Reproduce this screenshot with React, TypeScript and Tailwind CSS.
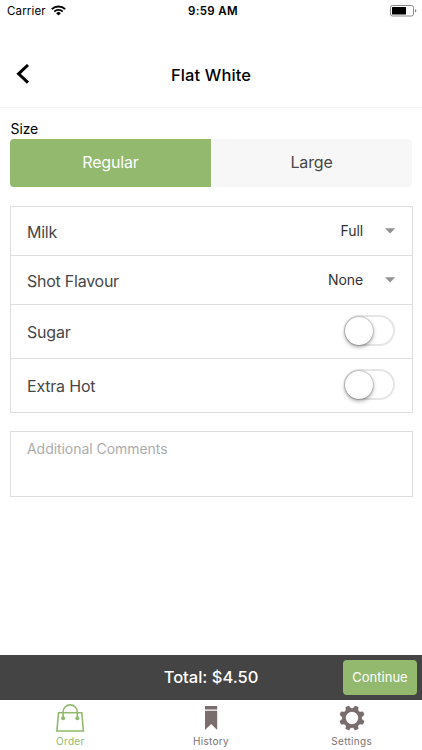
import React from "react";

const GREEN = "#92b96e";

function StatusBar() {
  return (
    <div className="flex h-[22px] items-center pt-px text-[11.5px] text-black">
      <div className="flex flex-1 items-center gap-[5px] pl-[7px]">
        <span className="tracking-[0.15px]">Carrier</span>
        <svg className="-mt-[2px]" width="15" height="11" viewBox="0 0 15 11" fill="none" stroke="#000">
          <path d="M0.8 4.2a9.5 9.5 0 0 1 13.4 0" strokeWidth="1.9" />
          <path d="M3.3 6.7a5.9 5.9 0 0 1 8.4 0" strokeWidth="1.8" />
          <path d="M7.5 10.6 5.1 8.3a3.4 3.4 0 0 1 4.8 0z" fill="#000" stroke="none" />
        </svg>
      </div>
      <span className="pl-[2px] font-semibold tracking-[0.35px]">9:59 AM</span>
      <div className="flex flex-1 justify-end pr-[5px]">
        <svg className="-mt-px" width="27" height="12" viewBox="0 0 27 12">
          <rect x="0.5" y="0.5" width="23" height="10.5" rx="2" fill="none" stroke="#8a8a8a" />
          <rect x="2" y="2" width="14" height="7.5" rx="0.5" fill="#000" />
          <path d="M25 4v3.6q1.4-.6 1.4-1.8T25 4z" fill="#8a8a8a" />
        </svg>
      </div>
    </div>
  );
}

function Header() {
  return (
    <header className="flex h-[86px] items-center border-b border-[#f3f3f3] pt-[20px] text-black">
      <button aria-label="Back" className="-mt-px flex w-[80px] pl-[16px]">
        <svg width="14" height="20" viewBox="0 0 14 20" fill="none" stroke="#000" strokeWidth="3">
          <path d="M12 1 2.6 9.8l9.4 8.8" />
        </svg>
      </button>
      <h1 className="flex-1 text-center text-[16.5px] font-medium leading-[20px] tracking-[0.1px]">Flat White</h1>
      <div className="w-[80px]" />
    </header>
  );
}

function SelectRow({ label, value }: { label: string; value: string }) {
  return (
    <div className="flex h-[49px] items-center border-b border-[#dedede] px-[16px]">
      <span className="flex-1 pt-px text-[16px] tracking-[-0.25px]">{label}</span>
      <span className="-mt-[2px] text-[14px] tracking-[-0.1px] text-[#333]">{value}</span>
      <svg className="ml-[22px]" width="11" height="6" viewBox="0 0 11 6">
        <path d="M0 0.3h10.2L5.1 5.6z" fill="#929292" />
      </svg>
    </div>
  );
}

function ToggleRow({ label, last = false }: { label: string; last?: boolean }) {
  return (
    <div
      className={
        last
          ? "flex h-[53px] items-center pl-[16px] pr-[17px]"
          : "flex h-[54px] items-center border-b border-[#dedede] pl-[16px] pr-[17px]"
      }
    >
      <span className="flex-1 text-[16px] tracking-[-0.2px]">{label}</span>
      <span className="-mt-[2px] flex h-[31px] w-[51px] items-center rounded-full border-2 border-[#e6e6e6]">
        <span className="-ml-px h-[28px] w-[28px] shrink-0 rounded-full bg-white shadow-[0_2px_4px_rgba(0,0,0,0.35),0_0_2px_rgba(0,0,0,0.45)]" />
      </span>
    </div>
  );
}

function BagIcon() {
  return (
    <svg width="30" height="30" viewBox="0 0 30 30" fill="none" stroke={GREEN} strokeWidth="1.6">
      <path d="M3.5 9.8h23.3l1.6 18.2H1.9z" />
      <path d="M8.1 15V9a7.1 7.1 0 0 1 14.2 0V15" />
      <circle cx="8.1" cy="15.3" r="2" fill={GREEN} stroke="none" />
      <circle cx="22.3" cy="15.3" r="2" fill={GREEN} stroke="none" />
    </svg>
  );
}

function BookmarkIcon() {
  return (
    <svg width="30" height="30" viewBox="0 0 30 30" fill="#796d6d">
      <path d="M9 3h12.2v3.6H9zM9 7.8h12.2v19.3l-6.1-6.2L9 27.1z" />
    </svg>
  );
}

function GearIcon() {
  const teeth = [22.5, 67.5, 112.5, 157.5, 202.5, 247.5, 292.5, 337.5];
  return (
    <svg width="30" height="30" viewBox="0 0 30 30">
      <g fill="#796d6d">
        {teeth.map((a) => (
          <path key={a} d="M10.8 7.2Q12.7 5.6 12.8 3.5 12.9 2.3 14 2.3h2q1.1 0 1.2 1.2.1 2.1 2 3.7z" transform={`rotate(${a} 15 15)`} />
        ))}
      </g>
      <circle cx="15" cy="15" r="8" fill="none" stroke="#796d6d" strokeWidth="3.6" />
    </svg>
  );
}

function Tab({ label, active = false, children }: { label: string; active?: boolean; children: React.ReactNode }) {
  return (
    <div
      className={
        active
          ? "flex flex-1 flex-col items-center text-[#92b96e]"
          : "flex flex-1 flex-col items-center text-[#7b7272]"
      }
    >
      {children}
      <span className="mt-px text-[10px] leading-[14px] tracking-[0.3px]">{label}</span>
    </div>
  );
}

export default function App() {
  return (
    <div className="flex h-[750px] w-[422px] flex-col overflow-hidden bg-white font-[Inter,'Liberation_Sans',sans-serif] text-[#474747]">
      <StatusBar />
      <Header />
      <main className="flex-1 px-[10px]">
        <div className="pb-px pl-[0.5px] pt-[11px] text-[14px] leading-[19px] tracking-[-0.1px] text-black">Size</div>
        <div className="flex h-[48px] overflow-hidden rounded-[4px] text-[16px] leading-[46px]">
          <div className="w-[201px] bg-[#92b96e] text-center tracking-[-0.15px] text-white">Regular</div>
          <div className="flex-1 bg-[#f7f7f7] text-center tracking-[-0.15px]">Large</div>
        </div>
        <div className="mt-[19px] w-[403px] border border-[#dedede]">
          <SelectRow label="Milk" value="Full" />
          <SelectRow label="Shot Flavour" value="None" />
          <ToggleRow label="Sugar" />
          <ToggleRow label="Extra Hot" last />
        </div>
        <div className="mt-[18px] h-[66px] w-[403px] border border-[#dedede] px-[16px] pt-[7px] text-[14px] leading-[20px] tracking-[-0.05px] text-[#acacac]">
          Additional Comments
        </div>
      </main>
      <div className="flex h-[45px] items-center bg-[#444] pr-[5px] text-white">
        <div className="w-[79px]" />
        <div className="flex-1 text-center text-[16.5px] font-medium">Total: $4.50</div>
        <button className="h-[35px] w-[74px] rounded-[4px] bg-[#92b96e] text-[13px]">Continue</button>
      </div>
      <nav className="flex h-[50px] pt-[3px]">
        <Tab label="Order" active>
          <BagIcon />
        </Tab>
        <Tab label="History">
          <BookmarkIcon />
        </Tab>
        <Tab label="Settings">
          <GearIcon />
        </Tab>
      </nav>
    </div>
  );
}
